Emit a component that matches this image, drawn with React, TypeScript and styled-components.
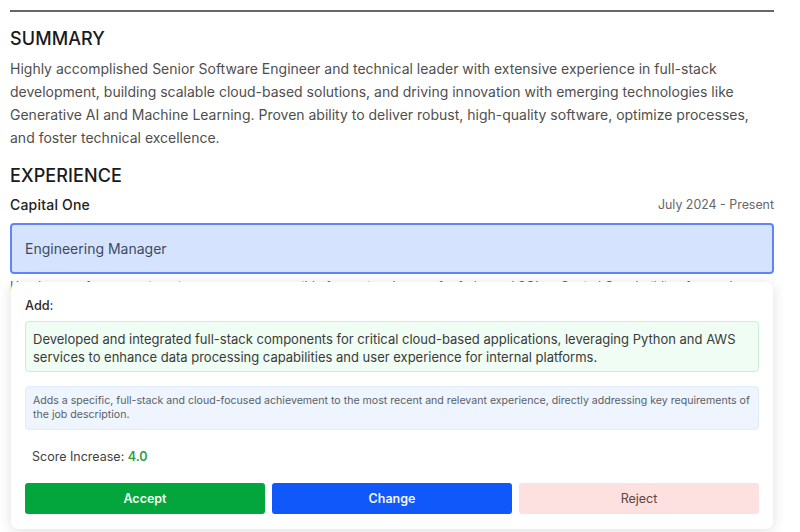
import React from "react";
import styled, { createGlobalStyle } from "styled-components";

const Global = createGlobalStyle`
  html, body { margin: 0; padding: 0; background: #fff; }
  body { width: 800px; height: 532px; overflow: hidden; font-family: Inter, "Liberation Sans", sans-serif; }
`;

const Page = styled.div`
  position: relative;
  width: 800px;
  height: 532px;
  overflow: hidden;
  padding: 10px 26px 0 10px;
  box-sizing: border-box;
`;
const Rule = styled.hr`
  margin: 0;
  border: 0;
  height: 2px;
  background: #666;
`;
const Heading = styled.h2<{ $top: number }>`
  margin: ${(p) => p.$top}px 0 0;
  font-size: 18px;
  line-height: 28px;
  font-weight: 500;
  color: #1a1a1a;
  letter-spacing: 0.1px;
`;
const Summary = styled.p`
  margin: 4px 0 0;
  font-size: 14px;
  line-height: 23px;
  color: #4f4f4f;
`;
const JobRow = styled.div`
  display: flex;
  justify-content: space-between;
  align-items: center;
  margin-top: 2px;
  height: 24px;
`;
const Company = styled.span`
  font-size: 14px;
  font-weight: 500;
  color: #222;
  letter-spacing: 0.2px;
`;
const Dates = styled.span`
  font-size: 12.4px;
  color: #666;
`;
const TitleBox = styled.div`
  display: flex;
  align-items: center;
  box-sizing: border-box;
  margin-top: 7px;
  height: 51px;
  padding: 0 13px;
  background: #d6e3fe;
  border: 2px solid #5f86f6;
  border-radius: 4px;
  font-size: 14px;
  color: #3b4a63;
`;
const Clipped = styled.p`
  margin: 3px 0 0;
  font-size: 12.4px;
  line-height: 20px;
  color: #666;
  white-space: nowrap;
  overflow: hidden;
`;
const Card = styled.section`
  position: absolute;
  left: 11px;
  top: 282px;
  width: 762px;
  height: 247px;
  box-sizing: border-box;
  padding: 15px 14px 0;
  background: #fff;
  border-radius: 7px;
  box-shadow: 0 2px 14px rgba(0, 0, 0, 0.13);
`;
const AddLabel = styled.div`
  font-size: 12.7px;
  line-height: 18px;
  font-weight: 500;
  color: #2a2a2a;
`;
const Added = styled.div`
  box-sizing: border-box;
  margin-top: 6px;
  height: 51px;
  padding: 8px 7px;
  background: #effdf4;
  border: 1px solid #c6f0d4;
  border-radius: 4px;
  font-size: 13px;
  line-height: 18px;
  color: #3a3a3a;
`;
const Reason = styled.div`
  box-sizing: border-box;
  margin-top: 14px;
  height: 44px;
  padding: 7px 4px 7px 7px;
  background: #eef5fe;
  border: 1px solid #dfeafb;
  border-radius: 4px;
  font-size: 10.6px;
  line-height: 14px;
  color: #5a5e66;
`;
const Score = styled.div`
  margin-top: 17px;
  padding-left: 7px;
  font-size: 12.5px;
  line-height: 20px;
  color: #3f3f3f;
`;
const ScoreValue = styled.span`
  font-weight: 600;
  color: #2f9e44;
`;
const Actions = styled.div`
  display: grid;
  grid-template-columns: repeat(3, 1fr);
  gap: 7px;
  margin-top: 16px;
`;
const Action = styled.button<{ $bg: string; $fg: string; $w: number }>`
  height: 31px;
  padding: 0;
  border: 0;
  border-radius: 3px;
  background: ${(p) => p.$bg};
  color: ${(p) => p.$fg};
  font-family: inherit;
  font-size: 12.5px;
  font-weight: ${(p) => p.$w};
`;

export default function App() {
  return (
    <Page>
      <Global />
      <Rule />
      <Heading $top={13}>SUMMARY</Heading>
      <Summary>
        Highly accomplished Senior Software Engineer and technical leader with extensive experience in full-stack
        development, building scalable cloud-based solutions, and driving innovation with emerging technologies like
        Generative AI and Machine Learning. Proven ability to deliver robust, high-quality software, optimize processes,
        and foster technical excellence.
      </Summary>
      <Heading $top={13}>EXPERIENCE</Heading>
      <JobRow>
        <Company>Capital One</Company>
        <Dates>July 2024 - Present</Dates>
      </JobRow>
      <TitleBox>Engineering Manager</TitleBox>
      <Clipped>
        Hands-on software engineering manager responsible for paving the way for federated SQL at Capital One, building fast and
      </Clipped>
      <Card>
        <AddLabel>Add:</AddLabel>
        <Added>
          Developed and integrated full-stack components for critical cloud-based applications, leveraging Python and AWS
          services to enhance data processing capabilities and user experience for internal platforms.
        </Added>
        <Reason>
          Adds a specific, full-stack and cloud-focused achievement to the most recent and relevant experience, directly
          addressing key requirements of the job description.
        </Reason>
        <Score>
          Score Increase: <ScoreValue>4.0</ScoreValue>
        </Score>
        <Actions>
          <Action $bg="#02a63c" $fg="#f4fff7" $w={600}>Accept</Action>
          <Action $bg="#1158fb" $fg="#f2f6ff" $w={600}>Change</Action>
          <Action $bg="#fde0e0" $fg="#5a4646" $w={400}>Reject</Action>
        </Actions>
      </Card>
    </Page>
  );
}
